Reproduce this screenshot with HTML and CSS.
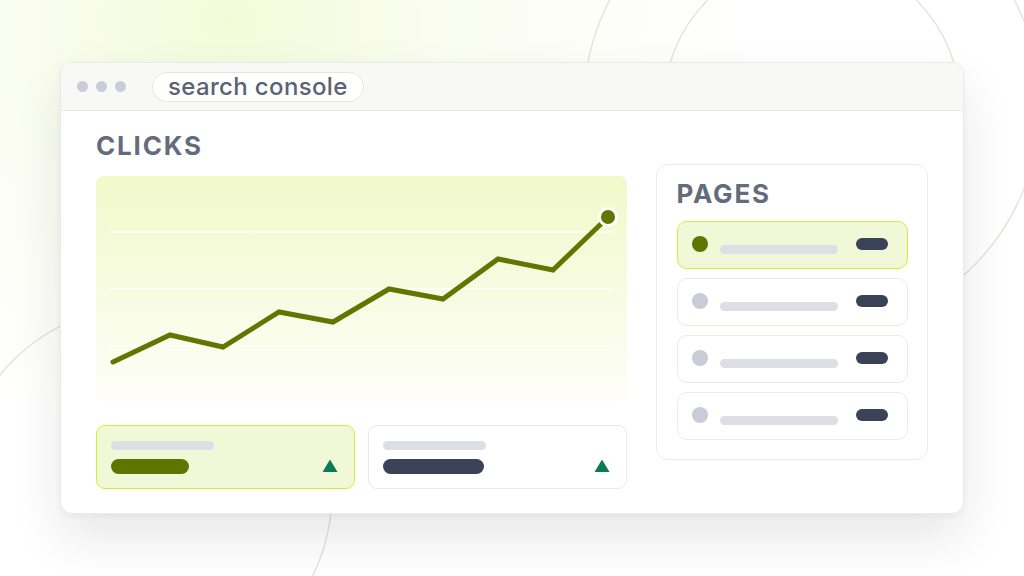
FILE: index.html
```html
<!DOCTYPE html>
<html lang="en">
<head>
<meta charset="utf-8">
<title>search console</title>
<link rel="stylesheet" href="styles.css">
</head>
<body>
<div class="stage">
  <svg class="deco" width="1024" height="576" viewBox="0 0 1024 576" aria-hidden="true">
    <circle cx="812" cy="105" r="228" />
    <circle cx="812" cy="105" r="148" />
    <circle cx="145" cy="493" r="187" />
  </svg>
  <div class="window">
    <div class="titlebar">
      <div class="dots"><span></span><span></span><span></span></div>
      <div class="url">search console</div>
    </div>
    <div class="content">
      <div class="left">
        <h2 class="heading">CLICKS</h2>
        <div class="chart">
          <svg width="530" height="225" viewBox="0 0 530 225">
            <g class="grid">
              <line x1="12" y1="56" x2="518" y2="56" />
              <line x1="12" y1="113" x2="518" y2="113" />
              <line x1="12" y1="170" x2="518" y2="170" />
            </g>
            <polyline class="trend" points="17,186 74,159 127,171 183,136 237,146 293,113 347,123 402,83 457,94 507,46" />
            <circle class="end" cx="512" cy="41" r="8.5" />
          </svg>
        </div>
        <div class="stats">
          <div class="stat active">
            <div class="bar-light"></div>
            <div class="stat-row">
              <div class="bar-dark short"></div>
              <div class="tri"></div>
            </div>
          </div>
          <div class="stat">
            <div class="bar-light"></div>
            <div class="stat-row">
              <div class="bar-dark"></div>
              <div class="tri"></div>
            </div>
          </div>
        </div>
      </div>
      <div class="panel">
        <h2 class="heading">PAGES</h2>
        <div class="rows">
          <div class="row active"><span class="dot"></span><span class="line"></span><span class="pill"></span></div>
          <div class="row"><span class="dot"></span><span class="line"></span><span class="pill"></span></div>
          <div class="row"><span class="dot"></span><span class="line"></span><span class="pill"></span></div>
          <div class="row"><span class="dot"></span><span class="line"></span><span class="pill"></span></div>
        </div>
      </div>
    </div>
  </div>
</div>
</body>
</html>
```

FILE: styles.css
```css
* { box-sizing: border-box; }

html, body {
  margin: 0;
  padding: 0;
}

body {
  width: 1024px;
  height: 576px;
  overflow: hidden;
  font-family: "Inter", "Noto Sans", "Liberation Sans", sans-serif;
  background: #ffffff;
}

.stage {
  position: relative;
  width: 1024px;
  height: 576px;
  padding: 62px 60px 0 60px;
  background:
    radial-gradient(ellipse 520px 430px at 230px 20px, rgba(242, 250, 212, 0.9) 0%, rgba(246, 251, 228, 0.55) 40%, rgba(255, 255, 255, 0) 100%),
    #ffffff;
}

.deco {
  position: absolute;
  left: 0;
  top: 0;
  fill: none;
  stroke: #e3e3dd;
  stroke-width: 1.4;
}

.window {
  position: relative;
  z-index: 1;
  width: 904px;
  height: 452px;
  background: #ffffff;
  border: 1px solid #ebebe7;
  border-radius: 12px;
  overflow: hidden;
  box-shadow: 0 24px 50px rgba(30, 32, 40, 0.10), 0 2px 6px rgba(30, 32, 40, 0.04);
}

.titlebar {
  height: 48px;
  background: #f8f8f6;
  border-bottom: 1px solid #e8e8e3;
  display: flex;
  align-items: center;
  padding-left: 16px;
  gap: 26px;
}

.dots {
  display: flex;
  gap: 8px;
}

.dots span {
  width: 11px;
  height: 11px;
  border-radius: 50%;
  background: #cbccd7;
}

.url {
  height: 30px;
  padding: 0 15px 0 15px;
  border: 1.5px solid #e6e6e0;
  border-radius: 15px;
  background: #ffffff;
  color: #5b6273;
  font-size: 24px;
  font-weight: 500;
  line-height: 27px;
  letter-spacing: 0.35px;
  display: flex;
  align-items: center;
}

.content {
  display: grid;
  grid-template-columns: 1fr 272px;
  column-gap: 29px;
  padding: 19px 35px 0 35px;
}

.heading {
  margin: 0;
  font-size: 26px;
  line-height: 32px;
  height: 32px;
  font-weight: 700;
  letter-spacing: 1.8px;
  color: #646b7c;
}

.chart {
  margin-top: 14px;
  height: 225px;
  border-radius: 8px;
  background: linear-gradient(180deg, #f2f9ca 0%, #f6fbde 45%, #fefef8 100%);
}

.chart svg {
  display: block;
}

.grid line {
  stroke: #ffffff;
  stroke-width: 1.5;
  opacity: 0.9;
}

.trend {
  fill: none;
  stroke: #627500;
  stroke-width: 5;
  stroke-linecap: round;
  stroke-linejoin: miter;
}

.end {
  fill: #627500;
  stroke: #ffffff;
  stroke-width: 3;
}

.stats {
  margin-top: 24px;
  display: grid;
  grid-template-columns: 1fr 1fr;
  column-gap: 13px;
}

.stat {
  height: 64px;
  border: 1.5px solid #e9e9e4;
  border-radius: 9px;
  background: #ffffff;
  padding: 14.5px 16.5px 0 13.5px;
}

.stat.active {
  background: #f1f8d7;
  border-color: #d0ee36;
}

.bar-light {
  width: 103px;
  height: 9px;
  border-radius: 5px;
  background: #dddfe5;
}

.stat-row {
  margin-top: 9.5px;
  display: flex;
  justify-content: space-between;
  align-items: flex-start;
}

.bar-dark {
  width: 101px;
  height: 15px;
  border-radius: 8px;
  background: #3a4257;
}

.bar-dark.short {
  width: 78px;
  background: #617400;
}

.tri {
  width: 15px;
  height: 12.5px;
  margin-top: 0.5px;
  background: #0b7a55;
  clip-path: polygon(50% 0, 100% 100%, 0 100%);
}

.panel {
  margin-top: 34px;
  align-self: start;
  border: 1.5px solid #ebebe6;
  border-radius: 12px;
  padding: 13px 19.5px 19px 19.5px;
}

.rows {
  margin-top: 10.5px;
  display: flex;
  flex-direction: column;
  gap: 9px;
}

.row {
  height: 48px;
  border: 1.5px solid #ebebe6;
  border-radius: 10px;
  background: #ffffff;
  display: flex;
  align-items: center;
  padding-left: 14px;
}

.row.active {
  background: #f1f8d7;
  border-color: #d0ee36;
}

.dot {
  width: 16px;
  height: 16px;
  border-radius: 50%;
  background: #c9ccd6;
  margin-top: -1px;
}

.row.active .dot {
  background: #627500;
}

.line {
  width: 118px;
  height: 9px;
  margin-left: 12px;
  margin-top: 9px;
  border-radius: 5px;
  background: #dddfe5;
}

.pill {
  width: 32px;
  height: 12px;
  margin-left: 18px;
  margin-top: -1px;
  border-radius: 6px;
  background: #3a4257;
}
```
